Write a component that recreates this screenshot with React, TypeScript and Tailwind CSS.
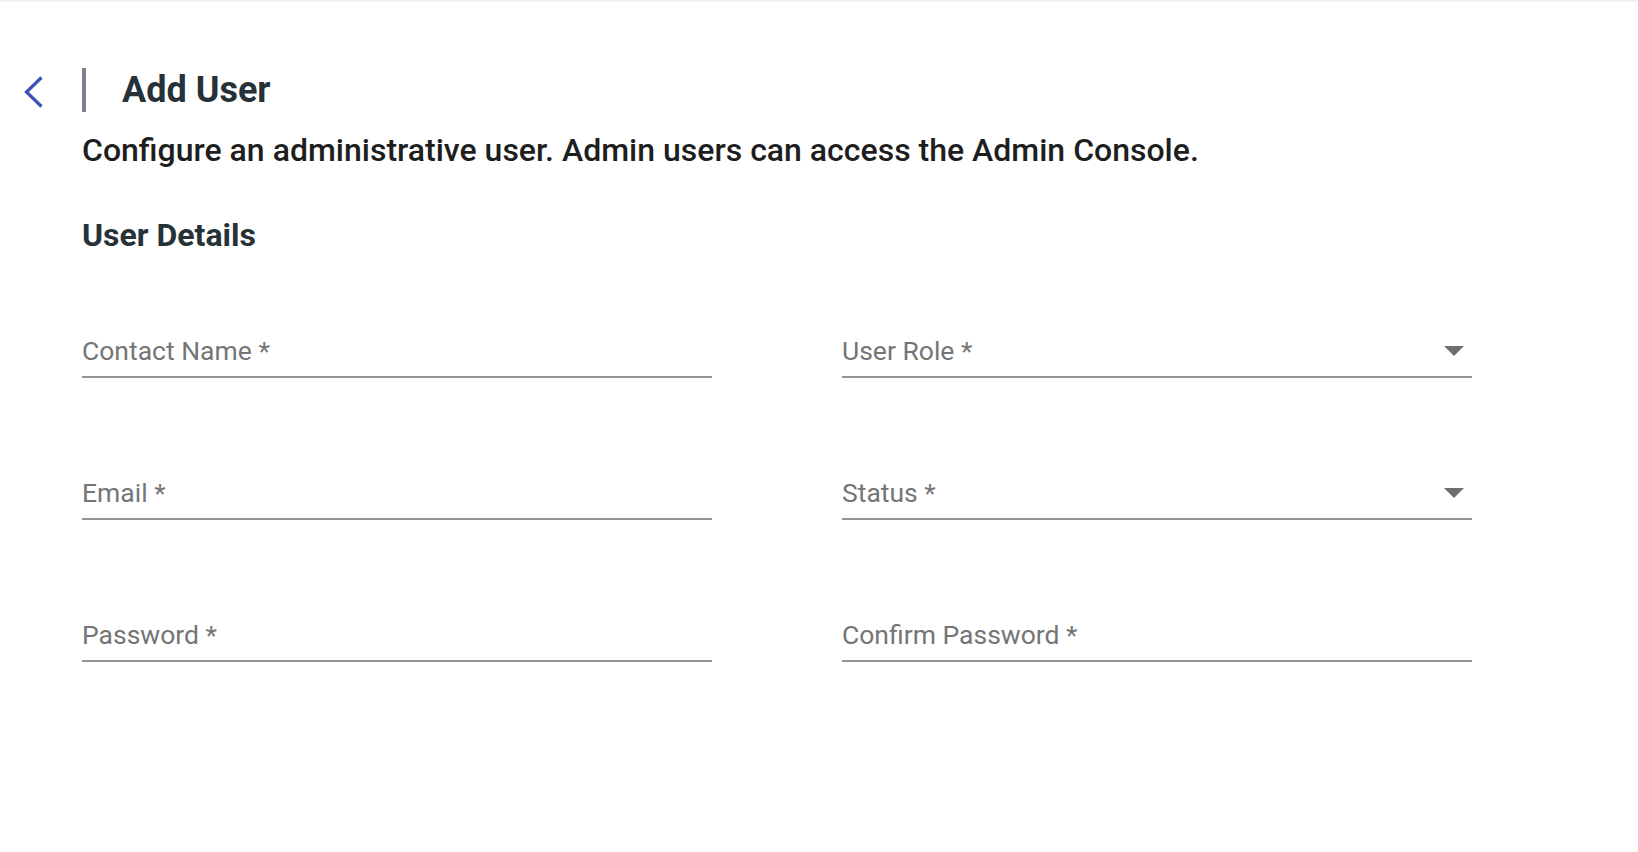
import React from "react";

interface FieldProps {
  label: string;
  select?: boolean;
}

function Field({ label, select }: FieldProps) {
  return (
    <div className="flex items-center justify-between border-b-2 border-[#949494] pb-[9px]">
      <span className="text-[26.5px] leading-[32px] text-[#757575]">{label}</span>
      {select && (
        <svg width="20" height="10" viewBox="0 0 20 10" className="mr-[8px]">
          <path d="M0 0 L20 0 L10 10 Z" fill="#6f6f6f" />
        </svg>
      )}
    </div>
  );
}

export default function App() {
  return (
    <div className="min-h-screen bg-white font-['Roboto',sans-serif]">
      <div className="h-[2px] bg-[#f2f2f2]" />

      {/* Header */}
      <div className="mt-[66px] flex items-center">
        <button className="ml-[24px] flex h-[44px] w-[58px] items-center pt-[4px]">
          <svg width="20" height="32" viewBox="0 0 20 32">
            <polyline
              points="17.5,1.5 2.5,16 17.5,30.5"
              fill="none"
              stroke="#3f51b5"
              strokeWidth="3.2"
            />
          </svg>
        </button>
        <div className="h-[44px] w-[4px] bg-[#7b828b]" />
        <h1 className="ml-[36px] text-[36px] font-bold leading-[44px] text-[#263238]">Add User</h1>
      </div>

      <div className="pl-[82px]">
        <p className="mt-[18px] text-[32px] font-medium leading-[40px] text-[#1e1e1e]">
          Configure an administrative user. Admin users can access the Admin Console.
        </p>

        <h2 className="mt-[45px] text-[32px] font-bold leading-[40px] text-[#263238]">User Details</h2>

        {/* Form */}
        <div className="mt-[80px] grid grid-cols-[630px_630px] gap-x-[130px] gap-y-[99px]">
          <Field label="Contact Name *" />
          <Field label="User Role *" select />
          <Field label="Email *" />
          <Field label="Status *" select />
          <Field label="Password *" />
          <Field label="Confirm Password *" />
        </div>
      </div>
    </div>
  );
}
